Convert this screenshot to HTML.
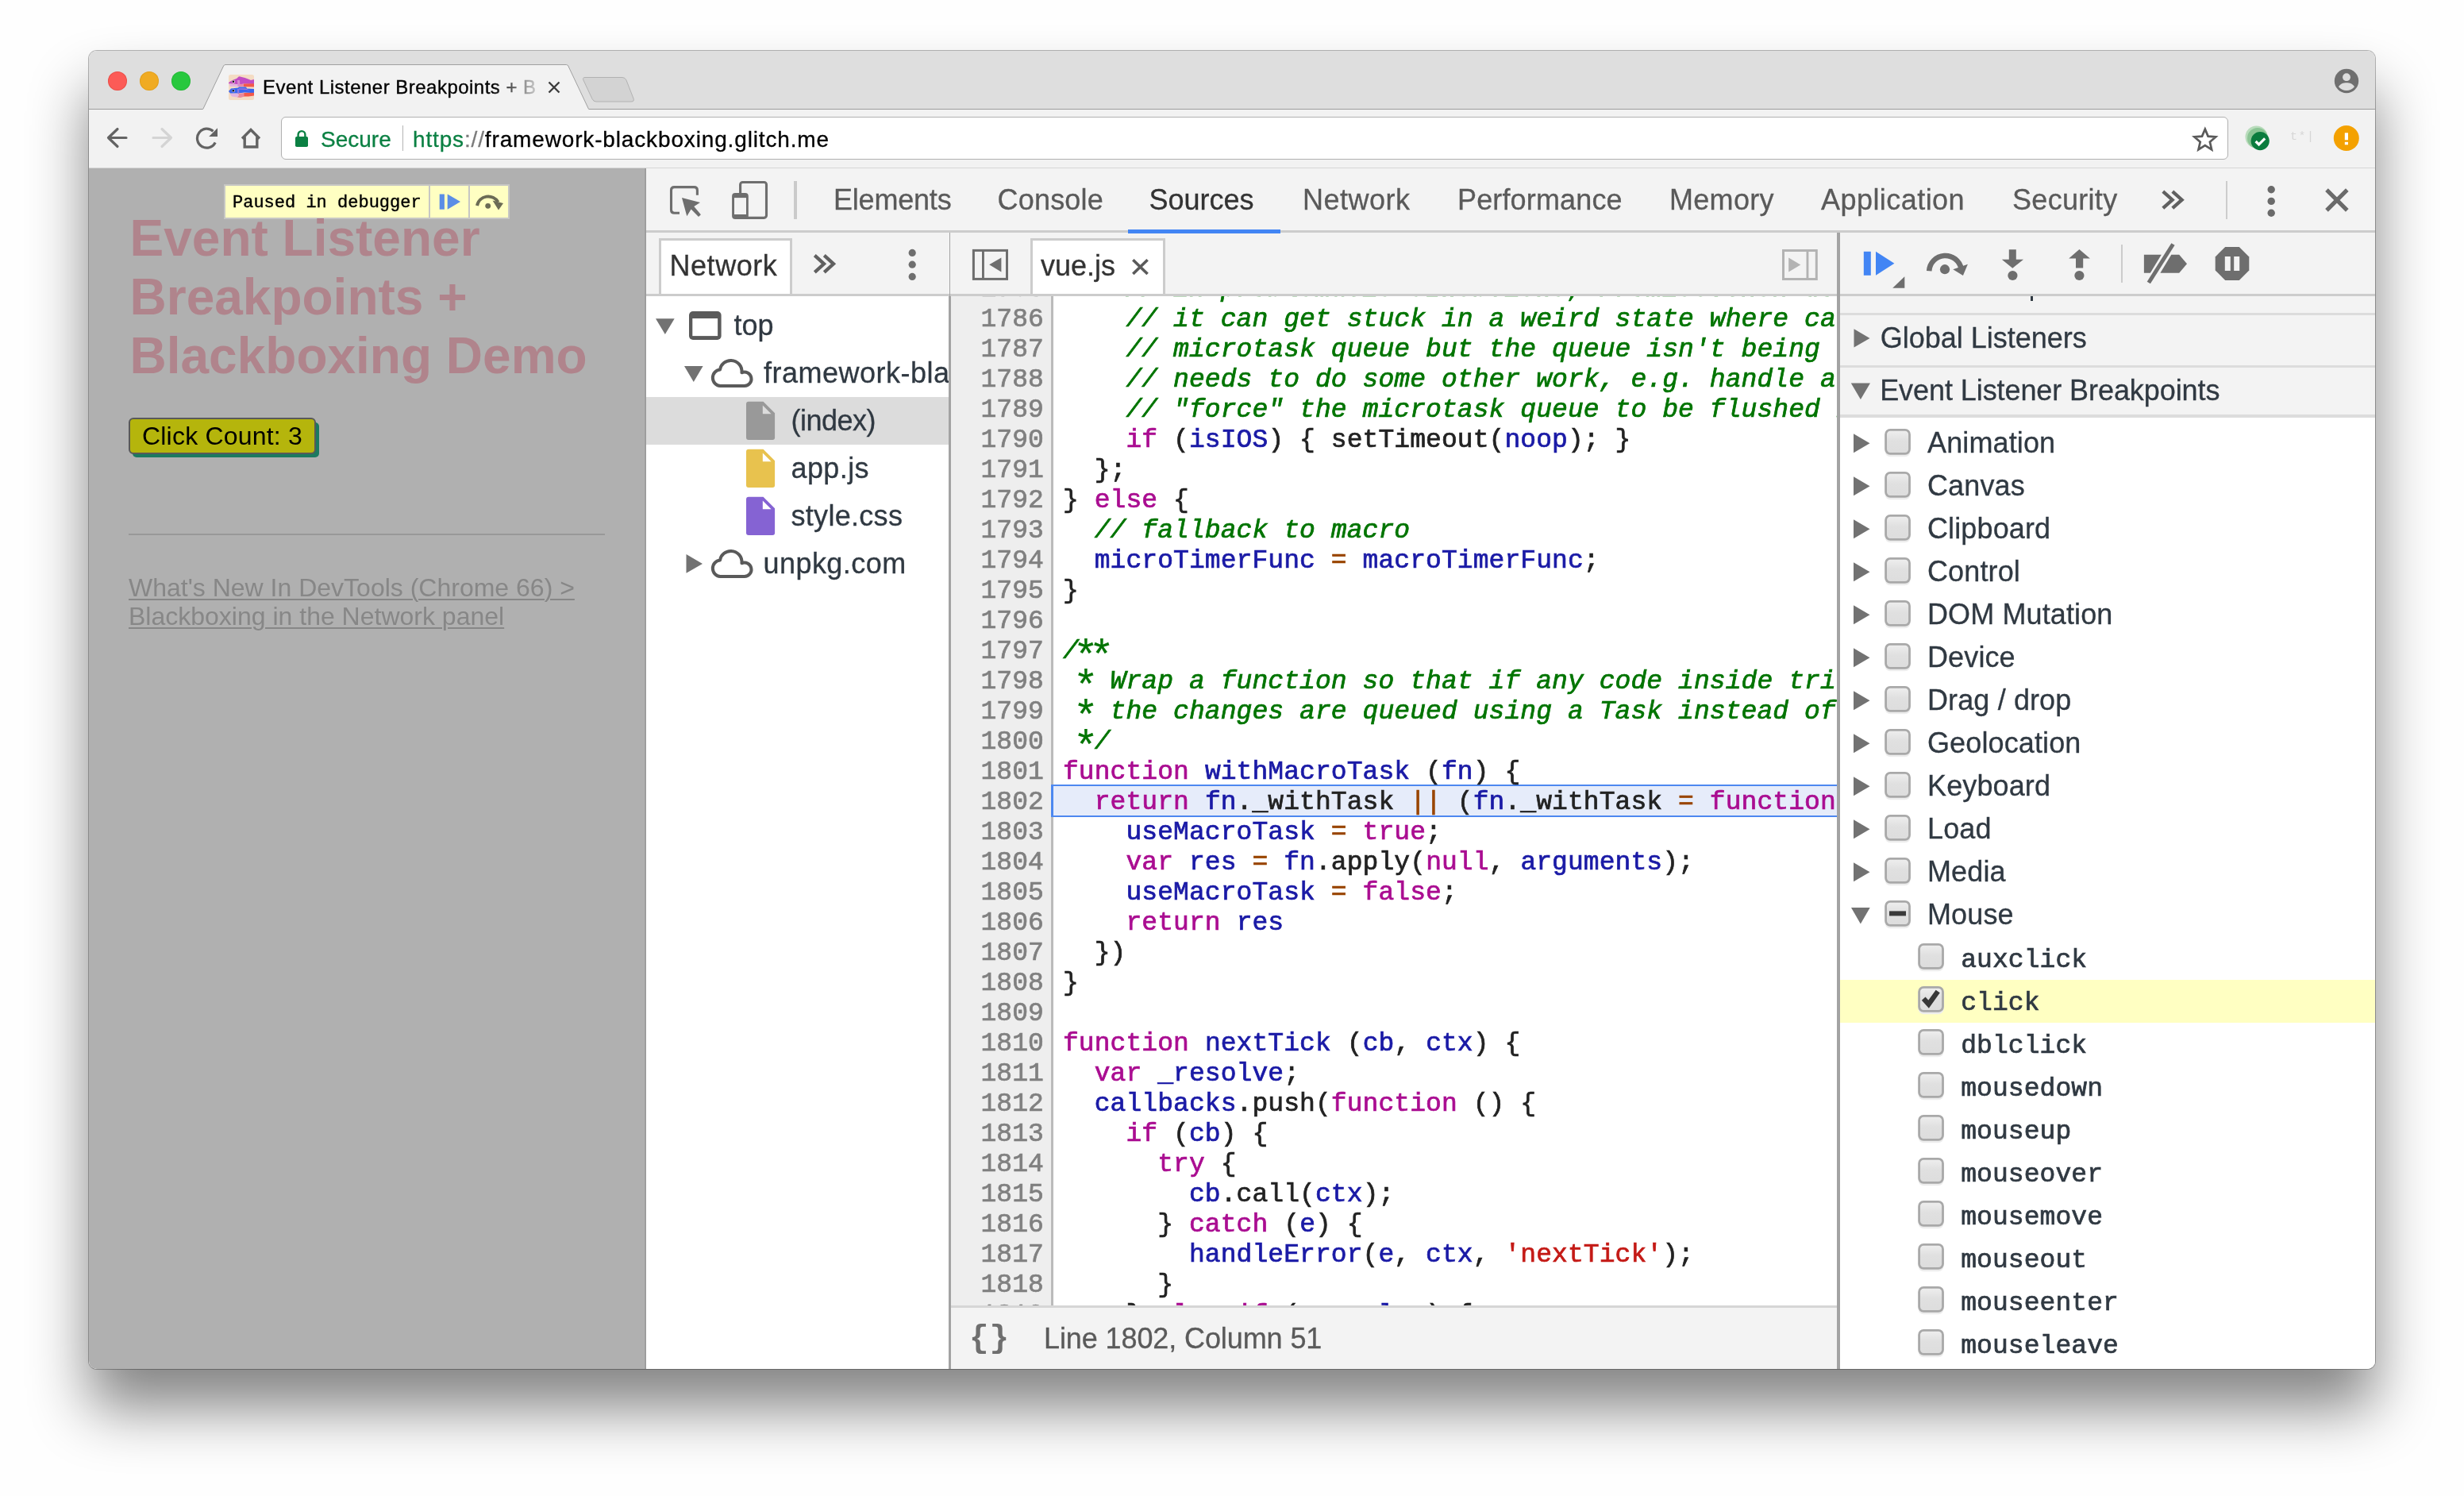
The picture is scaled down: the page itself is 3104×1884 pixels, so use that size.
<!DOCTYPE html>
<html><head><meta charset="utf-8"><title>Event Listener Breakpoints</title>
<style>
*{box-sizing:border-box;margin:0;padding:0}
html,body{width:3104px;height:1884px;overflow:hidden;background:#fefefe;font-family:"Liberation Sans",sans-serif;}
.a{position:absolute}
#shadow{position:absolute;left:112px;top:64px;width:2880px;height:1660px;border-radius:10px;box-shadow:0 50px 75px rgba(0,0,0,.48),0 0 0 1px rgba(0,0,0,.28);}
#win{position:absolute;left:112px;top:64px;width:2880px;height:1660px;border-radius:10px 10px 10px 10px;overflow:hidden;background:#f2f2f2;}
#in{position:absolute;left:-112px;top:-64px;width:3104px;height:1884px;will-change:transform;}
/* chrome */
#tabstrip{left:112px;top:63px;width:2880px;height:74px;background:#dedede;}
#tbline{left:112px;top:136.8px;width:2880px;height:1px;background:#9c9c9c;}
#toolbar{left:112px;top:137px;width:2880px;height:75px;background:#f2f2f2;}
.tl{width:24px;height:24px;border-radius:12px;top:90px}
#omni{left:354px;top:147px;width:2453px;height:54px;background:#fff;border:1px solid #b0b0b0;border-radius:6px;}
.url{top:153.5px;font-size:28px;line-height:44px;height:44px;white-space:nowrap;-webkit-text-stroke:.3px currentColor}
/* page */
#page{left:112px;top:212px;width:702px;height:1512px;background:#b0b0b0;overflow:hidden}
/* devtools */
#dt{left:814px;top:212px;width:2178px;height:1512px;background:#f3f3f3;overflow:hidden}
.sans{font-size:36px;white-space:nowrap;line-height:44px;height:44px;-webkit-text-stroke:.3px currentColor}
.mono{font-family:"Liberation Mono",monospace;font-size:33px;white-space:pre;letter-spacing:.07px;-webkit-text-stroke:.72px currentColor}
.tab{top:230.4px;color:#5a5a5a}
.hb{background:#ccc}
.ast{display:inline-block;transform:translate(-1px,9px) scale(1.6);font-style:normal;-webkit-text-stroke:.15px currentColor}
.k{color:#aa0d91}.d{color:#1a1aa6}.c{color:#007400;font-style:italic}.s{color:#c41a16}.o{color:#994500}
</style></head><body>
<div id="shadow"></div>
<div id="win"><div id="in">
<div class="a" id="tabstrip"></div>
<div class="a" id="toolbar"></div>
<div class="a" id="tbline"></div>
<div class="a" style="left:112px;top:211px;width:2880px;height:1px;background:#d6d6d6"></div>
<!-- active tab -->
<svg class="a" style="left:240px;top:70px" width="580" height="70" viewBox="240 70 580 70">
  <path d="M255.5 138 L281.6 83 Q282.4 81.5 284 81.5 L713.4 81.5 Q715 81.5 715.8 83 L741.8 138 L741.8 140 L255.5 140 Z" fill="#f2f2f2"/>
  <path d="M255.8 137.3 L281.6 83 Q282.4 81.5 284 81.5 L713.4 81.5 Q715 81.5 715.8 83 L741.5 137.3" fill="none" stroke="#a0a0a0" stroke-width="1"/>
  <rect x="256.6" y="137.7" width="484.2" height="2.6" fill="#f2f2f2"/>
  <!-- new tab button -->
  <path d="M737 97.5 L784 97.5 Q787.5 97.5 789 101 L798 124 Q799.5 128 795 128 L751 128 Q747.5 128 746 124.5 L735 101 Q733.5 97.5 737 97.5 Z" fill="#d3d3d3" stroke="#b2b2b2" stroke-width="1"/>
</svg>
<!-- traffic lights -->
<div class="a tl" style="left:136px;background:#fc5b57;box-shadow:inset 0 0 0 1px rgba(200,60,50,.35)"></div>
<div class="a tl" style="left:176px;background:#f0ab23;box-shadow:inset 0 0 0 1px rgba(200,140,20,.35)"></div>
<div class="a tl" style="left:216px;background:#28c83e;box-shadow:inset 0 0 0 1px rgba(30,160,40,.35)"></div>
<!-- favicon -->
<svg class="a" style="left:288px;top:94px" width="32" height="32" viewBox="0 0 32 32">
  <rect x="0" y="0" width="32" height="32" rx="2.5" fill="#f4dcc4"/>
  <path d="M0 10.2 C3 7.4 8 5.6 10 5 L13 2.2 C17 2.6 24 5 28 7 L32 6 L32 12 L20 11.6 L14 12.2 L0 11.2 Z" fill="#c24dc4"/>
  <path d="M0.5 11.4 L14 12.2 L14 15.2 L2 15 Z" fill="#e3b5e0"/>
  <path d="M11 7 L14 7 L14.5 15.2 L11.5 15 Z" fill="#d88cd0"/>
  <path d="M14 12.2 L20 11.6 L20 15.2 L14 15.3 Z" fill="#e88ca4"/>
  <path d="M19 11.6 L32 11.2 L32 15.6 L19 15.2 Z" fill="#f2594b"/>
  <circle cx="6.2" cy="8.8" r="1.9" fill="#f3e6f3"/><circle cx="6" cy="8.8" r="1.3" fill="#16160e"/>
  <path d="M0 21 L3 17.6 L12 16.6 L13 15.6 L22 15.6 L23 17.6 L32 18 L32 23.2 L20 22.6 L12 23.6 L2 23.6 Z" fill="#3a66f0"/>
  <path d="M11 18 L13.2 18 L13.2 24 L11 24 Z" fill="#8a78e0"/>
  <path d="M13 17.6 L21 17.6 L26 19.5 L21 18.8 L13 18.6 Z" fill="#c07ad0"/>
  <path d="M1.5 24 L12 23.8 L13 26 L11 28.6 L4 27.6 Z" fill="#e3b5e0"/>
  <path d="M12 23.8 L20 23 L20 27.6 L15 29 L11 28.6 L13 26 Z" fill="#e88a9c"/>
  <path d="M19.5 23 L32 22.8 L32 26.6 L25 27.6 L19.5 27.6 Z" fill="#f2594b"/>
  <circle cx="6.1" cy="20.3" r="1.9" fill="#d8c8f0"/><circle cx="5.9" cy="20.3" r="1.3" fill="#16160e"/>
</svg>
<div class="a" style="left:331px;top:89.6px;font-size:24px;letter-spacing:.48px;-webkit-text-stroke:.35px currentColor;line-height:40px;height:40px;width:352px;white-space:nowrap;overflow:hidden;color:#000;-webkit-mask-image:linear-gradient(90deg,#000 290px,rgba(0,0,0,.12) 348px);mask-image:linear-gradient(90deg,#000 290px,rgba(0,0,0,.12) 348px)">Event Listener Breakpoints + B</div>
<svg class="a" style="left:688px;top:100px" width="20" height="20" viewBox="0 0 20 20"><path d="M3.5 3.5 L16.5 16.5 M16.5 3.5 L3.5 16.5" stroke="#3c3c3c" stroke-width="2.4" fill="none"/></svg>
<!-- profile -->
<svg class="a" style="left:2940px;top:86px" width="32" height="32" viewBox="0 0 32 32">
  <circle cx="16" cy="16" r="15.2" fill="#6f6f6f"/>
  <circle cx="16" cy="11.2" r="4.9" fill="#dedede"/>
  <path d="M6 23.2 C8 19.5 12 18.2 16 18.2 C20 18.2 24 19.5 26 23.2 C23.5 26.3 20 28 16 28 C12 28 8.5 26.3 6 23.2 Z" fill="#dedede"/>
</svg>
<!-- nav buttons -->
<svg class="a" style="left:130px;top:155px" width="210" height="40" viewBox="130 155 210 40" fill="none" stroke-linecap="round" stroke-linejoin="round">
  <path d="M159 173.5 L137 173.5 M148 162.5 L136.5 173.5 L148 184.5" stroke="#636363" stroke-width="3.2"/>
  <path d="M193 173.5 L215 173.5 M204 162.5 L215.5 173.5 L204 184.5" stroke="#d4d4d4" stroke-width="3.2"/>
  <path d="M271.2 179.5 A12 12 0 1 1 268.5 165.2" stroke="#636363" stroke-width="3.2" stroke-linecap="butt"/>
  <path d="M274 161.2 L274 172 L263.2 172 Z" fill="#636363" stroke="none"/>
  <path d="M305 174.5 L316 163.5 L327 174.5 M308.2 172.5 L308.2 185 L323.8 185 L323.8 172.5" stroke="#636363" stroke-width="3.4" stroke-linecap="butt" stroke-linejoin="miter"/>
</svg>
<div class="a" id="omni"></div>
<!-- lock -->
<svg class="a" style="left:370px;top:160px" width="20" height="28" viewBox="370 160 20 28">
  <rect x="372" y="172" width="16" height="13" rx="1.8" fill="#0b8043"/>
  <path d="M375.6 173 L375.6 169.5 A4.4 4.4 0 0 1 384.4 169.5 L384.4 173" fill="none" stroke="#0b8043" stroke-width="2.4"/>
</svg>
<div class="a url" style="left:404px;color:#0b8043">Secure</div>
<div class="a" style="left:507px;top:158px;width:1px;height:32px;background:#b4b4b4"></div>
<div class="a url" style="left:520px;letter-spacing:.85px;color:#000"><span style="color:#0b8043">https</span><span style="color:#7a7a7a">://</span>framework-blackboxing.glitch.me</div>
<!-- star -->
<svg class="a" style="left:2760px;top:158px" width="36" height="34" viewBox="2760 158 36 34">
  <path d="M2777.8 162.6 L2781.6 171.6 L2791.3 172.4 L2783.9 178.8 L2786.1 188.3 L2777.8 183.2 L2769.5 188.3 L2771.7 178.8 L2764.3 172.4 L2774 171.6 Z" fill="none" stroke="#5a5a5a" stroke-width="2.7" stroke-linejoin="miter"/>
</svg>
<!-- ext icons -->
<svg class="a" style="left:2826px;top:156px" width="38" height="38" viewBox="2826 156 38 38">
  <circle cx="2842.5" cy="172.5" r="14" fill="#b9dcbc"/>
  <circle cx="2844" cy="174" r="13" fill="#8cc595"/>
  <circle cx="2847.2" cy="177.6" r="11.6" fill="#0b7c3e"/>
  <path d="M2841.6 178 L2845.6 182 L2853.2 174.4" fill="none" stroke="#fff" stroke-width="3.2"/>
</svg>
<div class="a" style="left:2885px;top:162px;font-size:15px;line-height:22px;color:#d6d6d6;letter-spacing:1.5px;font-family:'Liberation Mono',monospace">t*|</div>
<svg class="a" style="left:2938px;top:156px" width="36" height="36" viewBox="2938 156 36 36">
  <circle cx="2955.8" cy="174" r="16" fill="#f4a100"/>
  <rect x="2953.8" y="167.3" width="4.2" height="9" fill="#fff"/><rect x="2953.8" y="178.8" width="4.2" height="3.5" fill="#fff"/>
</svg>

<div class="a" id="page"></div>
<div class="a" style="left:812px;top:212px;width:2px;height:1512px;background:linear-gradient(90deg,#a4a4a4,#989898)"></div>
<!-- paused overlay -->
<div class="a" style="left:282px;top:232px;width:360px;height:44px;background:#ffffc2;border:2px solid #c7c7c4"></div>
<div class="a" style="left:540px;top:234px;width:2px;height:40px;background:#c7c7c4"></div>
<div class="a" style="left:590px;top:234px;width:2px;height:40px;background:#c7c7c4"></div>
<div class="a" style="left:293px;top:237px;font-family:'Liberation Mono',monospace;font-size:22px;line-height:38px;height:38px;white-space:pre;color:#000;-webkit-text-stroke:.4px #000">Paused in debugger</div>
<svg class="a" style="left:546px;top:236px" width="94" height="36" viewBox="546 236 94 36">
  <rect x="553.7" y="244.5" width="6.2" height="19.2" fill="#5b8de6"/>
  <path d="M563.7 244.5 L580 254.1 L563.7 263.7 Z" fill="#5b8de6"/>
  <path d="M601 259 A14.4 14.4 0 0 1 627.5 254.5" fill="none" stroke="#6b6b55" stroke-width="4"/>
  <path d="M620.5 252.5 L634 256 L628 264.5 Z" fill="#6b6b55"/>
  <circle cx="614.7" cy="259.3" r="3.4" fill="#6b6b55"/>
</svg>
<!-- heading -->
<div class="a" style="left:163.5px;top:262.5px;width:640px;font-size:64px;line-height:74px;font-weight:bold;color:#b0848c;white-space:nowrap">Event Listener<br>Breakpoints +<br>Blackboxing Demo</div>
<!-- button -->
<div class="a" style="left:167px;top:531.5px;width:235px;height:44px;background:#1b7a60;border-radius:5px"></div>
<div class="a" style="left:162px;top:526px;width:236px;height:46px;background:#b5b50c;border:2px solid #595959;border-radius:6px;font-size:32px;line-height:42px;color:#000;text-align:center;white-space:nowrap;letter-spacing:.2px">Click Count: 3</div>
<div class="a" style="left:162px;top:672px;width:600px;height:2px;background:#989898"></div>
<div class="a" style="left:162px;top:722px;width:640px;font-size:32px;line-height:36px;color:#878787;text-decoration:underline;text-decoration-thickness:2px;text-underline-offset:3px;white-space:nowrap">What's New In DevTools (Chrome 66) &gt;<br>Blackboxing in the Network panel</div>

<div class="a" id="dt"></div>
<!-- main toolbar -->
<div class="a hb" style="left:814px;top:290px;width:2178px;height:3px"></div>
<svg class="a" style="left:838px;top:224px" width="170" height="56" viewBox="838 224 170 56">
  <path d="M856 268.25 L849.5 268.25 Q845.5 268.25 845.5 264.25 L845.5 239.6 Q845.5 235.6 849.5 235.6 L874.4 235.6 Q878.4 235.6 878.4 239.6 L878.4 245.8" fill="none" stroke="#6e6e6e" stroke-width="3.1"/>
  <path d="M859 249 L882 255 L874.3 260 L882.9 270.3 L880 272.9 L870.6 263.6 L865.3 272.3 Z" fill="#6e6e6e"/>
  <rect x="932.6" y="229.55" width="32.9" height="44.8" rx="3" fill="none" stroke="#6e6e6e" stroke-width="3.1"/>
  <rect x="922.1" y="243" width="20.7" height="32.9" rx="4" fill="#6e6e6e"/>
  <rect x="925" y="249.1" width="15" height="20.9" fill="#f3f3f3"/>
  <rect x="1000" y="228" width="4" height="48" fill="#cacaca"/>
</svg>
<div class="a sans tab" style="left:1050px;letter-spacing:-.2px">Elements</div>
<div class="a sans tab" style="left:1256.5px;letter-spacing:.2px">Console</div>
<div class="a sans tab" style="left:1447.5px;color:#333">Sources</div>
<div class="a sans tab" style="left:1641px;letter-spacing:.5px">Network</div>
<div class="a sans tab" style="left:1836px;letter-spacing:.15px">Performance</div>
<div class="a sans tab" style="left:2103px;letter-spacing:.3px">Memory</div>
<div class="a sans tab" style="left:2294px;letter-spacing:.45px">Application</div>
<div class="a sans tab" style="left:2535px;letter-spacing:.3px">Security</div>
<div class="a" style="left:1421px;top:289px;width:192px;height:5px;background:#4285f4"></div>
<svg class="a" style="left:2715px;top:224px" width="260" height="56" viewBox="2715 224 260 56" fill="none">
  <path d="M2724.8 241.2 L2736.6 251.7 L2724.8 262.2 M2736.8 241.2 L2748.6 251.7 L2736.8 262.2" stroke="#606060" stroke-width="4.3"/>
  <rect x="2804" y="228" width="2" height="48" fill="#ccc"/>
  <circle cx="2861.2" cy="238.8" r="4.7" fill="#6a6a6a"/><circle cx="2861.2" cy="253.4" r="4.7" fill="#6a6a6a"/><circle cx="2861.2" cy="268.2" r="4.7" fill="#6a6a6a"/>
  <path d="M2931 239.2 L2956.8 264.8 M2956.8 239.2 L2931 264.8" stroke="#6a6a6a" stroke-width="5.2"/>
</svg>
<!-- second toolbar row -->
<div class="a hb" style="left:814px;top:370px;width:2178px;height:3px"></div>
<div class="a" style="left:830px;top:300px;width:168px;height:70px;background:#fff;border:3px solid #ccc;border-bottom:none"></div>
<div class="a sans" style="left:843.5px;top:312.5px;color:#333;letter-spacing:.55px">Network</div>
<svg class="a" style="left:1015px;top:305px" width="150" height="60" viewBox="1015 305 150 60" fill="none">
  <path d="M1026.3 321.7 L1038 332.3 L1026.3 342.9 M1038.3 321.7 L1050 332.3 L1038.3 342.9" stroke="#606060" stroke-width="4.3"/>
  <circle cx="1149.2" cy="318.4" r="4.6" fill="#6e6e6e"/><circle cx="1149.2" cy="333.2" r="4.6" fill="#6e6e6e"/><circle cx="1149.2" cy="348.4" r="4.6" fill="#6e6e6e"/>
</svg>
<div class="a" style="left:1196px;top:293px;width:1px;height:80px;background:#a3a3a3"></div>
<!-- editor tab row -->
<svg class="a" style="left:1220px;top:308px" width="56" height="50" viewBox="1220 308 56 50">
  <rect x="1226.4" y="315.4" width="42.1" height="36" fill="none" stroke="#6e6e6e" stroke-width="3"/>
  <rect x="1237" y="315" width="2.9" height="37" fill="#6e6e6e"/>
  <path d="M1246.2 333.3 L1261.4 324.5 L1261.4 342.4 Z" fill="#6e6e6e"/>
</svg>
<div class="a" style="left:1298px;top:300px;width:170px;height:70px;background:#fff;border:3px solid #ccc;border-bottom:none"></div>
<div class="a sans" style="left:1311px;top:313.2px;color:#333">vue.js</div>
<svg class="a" style="left:1420px;top:320px" width="32" height="32" viewBox="1420 320 32 32"><path d="M1427.3 327.3 L1445.6 345 M1445.6 327.3 L1427.3 345" stroke="#5a5a5a" stroke-width="3.6" fill="none"/></svg>
<svg class="a" style="left:2240px;top:308px" width="56" height="50" viewBox="2240 308 56 50">
  <rect x="2246.5" y="315.5" width="41.8" height="36" fill="none" stroke="#b3b3b3" stroke-width="3"/>
  <rect x="2275.5" y="315" width="2.9" height="37" fill="#b3b3b3"/>
  <path d="M2268.3 333.5 L2253.2 324.6 L2253.2 342.6 Z" fill="#b3b3b3"/>
</svg>
<div class="a" style="left:2314px;top:293px;width:4px;height:1431px;background:#a3a3a3"></div>
<!-- debugger toolbar -->
<svg class="a" style="left:2330px;top:300px" width="520" height="68" viewBox="2330 300 520 68">
  <rect x="2347.8" y="316.8" width="9" height="30" fill="#4285f4"/>
  <path d="M2363 316.8 L2386.4 331.8 L2363 346.8 Z" fill="#4285f4"/>
  <path d="M2384.2 362.8 L2399.3 362.8 L2399.3 348.2 Z" fill="#6e6e6e"/>
  <path d="M2430.2 341.2 A20.4 20.4 0 0 1 2470.6 338.5" fill="none" stroke="#6e6e6e" stroke-width="6.6"/>
  <path d="M2460.3 339.3 L2478.9 332.7 L2472.9 347 Z" fill="#6e6e6e"/>
  <circle cx="2450" cy="339.2" r="6.1" fill="#6e6e6e"/>
  <path d="M2530.8 314.2 L2539.8 314.2 L2539.8 326.7 L2549 326.7 L2535.3 337.8 L2521.8 326.7 L2530.8 326.7 Z" fill="#6e6e6e"/>
  <circle cx="2535.4" cy="347" r="6.1" fill="#6e6e6e"/>
  <path d="M2619.4 314 L2632.9 325.6 L2624.2 325.6 L2624.2 337.6 L2615 337.6 L2615 325.6 L2606.2 325.6 Z" fill="#6e6e6e"/>
  <circle cx="2619.4" cy="347" r="6.1" fill="#6e6e6e"/>
  <rect x="2672" y="308" width="2" height="48" fill="#ccc"/>
  <path d="M2700.9 320.8 L2722.8 320.8 L2708.8 343.8 L2700.9 343.8 Z" fill="#6e6e6e"/>
  <path d="M2735.3 320.8 L2745.2 320.8 L2755 332.2 L2745.2 343.8 L2721.4 343.8 Z" fill="#6e6e6e"/>
  <path d="M2737.5 307.5 L2706.8 356" stroke="#6e6e6e" stroke-width="5" fill="none"/>
  <path d="M2803.2 310.9 L2820.8 310.9 L2833.3 323.4 L2833.3 340.6 L2820.8 353 L2803.2 353 L2790.7 340.6 L2790.7 323.4 Z" fill="#6e6e6e"/>
  <rect x="2802.8" y="323" width="7" height="18" fill="#f3f3f3"/><rect x="2814.2" y="323" width="7" height="18" fill="#f3f3f3"/>
</svg>
<div class="a" style="left:814px;top:373px;width:381px;height:1351px;background:#fff"></div>
<div class="a" style="left:814px;top:500px;width:381px;height:60px;background:#dcdcdc"></div>
<div class="a" style="left:1195px;top:373px;width:3px;height:1351px;background:#a3a3a3"></div>
<svg class="a" style="left:814px;top:373px" width="381" height="380" viewBox="814 373 381 380">
<path d="M826 401.2 L849.7 401.2 L837.85 421 Z" fill="#727272"/>
<rect x="868" y="392" width="40.6" height="36" rx="5" fill="#5a5a5a"/><rect x="872.3" y="401" width="31.8" height="22.1" fill="#fff"/>
<path d="M862 461 L885.6 461 L873.8 481.1 Z" fill="#727272"/>
<path transform="translate(0,0)" d="M907.3 486 A10.3 10.3 0 0 1 907 465.5 A13.8 13.8 0 0 1 921.1 453.9 A13.8 13.8 0 0 1 934.4 469.3 A8.7 8.7 0 1 1 937.8 486 Z" fill="none" stroke="#5a5a5a" stroke-width="4" stroke-linejoin="round"/>
<g transform="translate(0,0)"><path d="M943 505.7 L961.5 505.7 L976.1 520.3 L976.1 551 Q976.1 554 973.1 554 L943 554 Q940 554 940 551 L940 508.7 Q940 505.7 943 505.7 Z" fill="#999"/><path d="M960.8 510.6 L960.8 521.3 L971.6 521.3 Z" fill="#dcdcdc"/></g>
<g transform="translate(0,60)"><path d="M943 505.7 L961.5 505.7 L976.1 520.3 L976.1 551 Q976.1 554 973.1 554 L943 554 Q940 554 940 551 L940 508.7 Q940 505.7 943 505.7 Z" fill="#e8c24e"/><path d="M960.8 510.6 L960.8 521.3 L971.6 521.3 Z" fill="#fff"/></g>
<g transform="translate(0,120)"><path d="M943 505.7 L961.5 505.7 L976.1 520.3 L976.1 551 Q976.1 554 973.1 554 L943 554 Q940 554 940 551 L940 508.7 Q940 505.7 943 505.7 Z" fill="#8563d3"/><path d="M960.8 510.6 L960.8 521.3 L971.6 521.3 Z" fill="#fff"/></g>
<path d="M864.5 698 L885 709.9 L864.5 721.8 Z" fill="#727272"/>
<path transform="translate(0,240)" d="M907.3 486 A10.3 10.3 0 0 1 907 465.5 A13.8 13.8 0 0 1 921.1 453.9 A13.8 13.8 0 0 1 934.4 469.3 A8.7 8.7 0 1 1 937.8 486 Z" fill="none" stroke="#5a5a5a" stroke-width="4" stroke-linejoin="round"/>
</svg>
<div class="a sans" style="left:924.5px;top:387.7px;color:#303942;letter-spacing:0px">top</div>
<div class="a sans" style="left:962px;top:447.7px;color:#303942;width:233px;overflow:hidden;letter-spacing:.5px">framework-blackboxing.glitch.me</div>
<div class="a sans" style="left:996.5px;top:507.7px;color:#303942;letter-spacing:-0.5px">(index)</div>
<div class="a sans" style="left:996.5px;top:567.7px;color:#303942;letter-spacing:0.4px">app.js</div>
<div class="a sans" style="left:996.5px;top:627.7px;color:#303942;letter-spacing:0.3px">style.css</div>
<div class="a sans" style="left:961.5px;top:687.7px;color:#303942;letter-spacing:0.45px">unpkg.com</div>
<div class="a" style="left:1198px;top:373px;width:1116px;height:1271px;background:#fff"></div>
<div class="a" style="left:1198px;top:373px;width:126px;height:1271px;background:#eee"></div>
<div class="a" style="left:1324px;top:373px;width:3px;height:1271px;background:#bbb"></div>
<div class="a" style="left:1324px;top:988px;width:990px;height:41px;background:#e6ecfa;border:2px solid #4d88f0;border-left-width:3px;border-right:none"></div>
<div class="a" style="left:1198px;top:373px;width:1116px;height:1271px;overflow:hidden">
<div class="a mono" id="gut" style="left:0;top:-26.80000000000001px;width:117px;text-align:right;line-height:38px;color:#808080">1785
1786
1787
1788
1789
1790
1791
1792
1793
1794
1795
1796
1797
1798
1799
1800
1801
1802
1803
1804
1805
1806
1807
1808
1809
1810
1811
1812
1813
1814
1815
1816
1817
1818
1819</div>
<div class="a mono" id="code" style="left:141px;top:-26.80000000000001px;line-height:38px;color:#222">    <span class="c">// in problematic UIWebViews, Promise.then doesn&#x27;t completely</span>
    <span class="c">// it can get stuck in a weird state where callbacks are pushed</span>
    <span class="c">// microtask queue but the queue isn&#x27;t being flushed, until the</span>
    <span class="c">// needs to do some other work, e.g. handle a timer. Therefore</span>
    <span class="c">// &quot;force&quot; the microtask queue to be flushed by adding an empty</span>
    <span class="k">if</span> (<span class="d">isIOS</span>) { setTimeout(<span class="d">noop</span>); }
  };
} <span class="k">else</span> {
  <span class="c">// fallback to macro</span>
  <span class="d">microTimerFunc</span> <span class="o">=</span> <span class="d">macroTimerFunc</span>;
}

<span class="c">/<span class="ast">*</span><span class="ast">*</span></span>
<span class="c"> <span class="ast">*</span> Wrap a function so that if any code inside tri</span>
<span class="c"> <span class="ast">*</span> the changes are queued using a Task instead of a MicroTask.</span>
<span class="c"> <span class="ast">*</span>/</span>
<span class="k">function</span> <span class="d">withMacroTask</span> (<span class="d">fn</span>) {
  <span class="k">return</span> <span class="d">fn</span>._withTask <span class="o">||</span> (<span class="d">fn</span>._withTask <span class="o">=</span> <span class="k">function</span> () {
    <span class="d">useMacroTask</span> <span class="o">=</span> <span class="k">true</span>;
    <span class="k">var</span> <span class="d">res</span> <span class="o">=</span> <span class="d">fn</span>.apply(<span class="k">null</span>, <span class="d">arguments</span>);
    <span class="d">useMacroTask</span> <span class="o">=</span> <span class="k">false</span>;
    <span class="k">return</span> <span class="d">res</span>
  })
}

<span class="k">function</span> <span class="d">nextTick</span> (<span class="d">cb</span>, <span class="d">ctx</span>) {
  <span class="k">var</span> <span class="d">_resolve</span>;
  <span class="d">callbacks</span>.push(<span class="k">function</span> () {
    <span class="k">if</span> (<span class="d">cb</span>) {
      <span class="k">try</span> {
        <span class="d">cb</span>.call(<span class="d">ctx</span>);
      } <span class="k">catch</span> (<span class="d">e</span>) {
        <span class="d">handleError</span>(<span class="d">e</span>, <span class="d">ctx</span>, <span class="s">&#x27;nextTick&#x27;</span>);
      }
    } <span class="k">else</span> <span class="k">if</span> (<span class="d">_resolve</span>) {</div>
</div>
<div class="a" style="left:1198px;top:1644px;width:1116px;height:3px;background:#d6d6d6"></div>
<div class="a" style="left:1198px;top:1647px;width:1116px;height:77px;background:#f3f3f3"></div>
<div class="a" style="left:1221px;top:1661.5px;font-family:'Liberation Mono',monospace;font-weight:bold;font-size:41px;line-height:48px;color:#6e6e6e;letter-spacing:1px;white-space:pre">{}</div>
<div class="a sans" style="left:1315px;top:1663.5px;color:#5a5a5a;letter-spacing:-.1px">Line 1802, Column 51</div>
<div class="a" style="left:2318px;top:373px;width:674px;height:1351px;background:#fff"></div>
<div class="a" style="left:2318px;top:373px;width:674px;height:149px;background:#f3f3f3"></div>
<div class="a" style="left:2318px;top:394px;width:674px;height:3px;background:#dcdcdc"></div>
<div class="a" style="left:2318px;top:460px;width:674px;height:3px;background:#dcdcdc"></div>
<div class="a" style="left:2318px;top:522px;width:674px;height:4px;background:#dcdcdc"></div>
<div class="a" style="left:2557.5px;top:373px;width:3.2px;height:5.6px;background:#303942"></div>
<div class="a sans" style="left:2368.7px;top:404px;color:#303942">Global Listeners</div>
<div class="a sans" style="left:2368.2px;top:470.2px;color:#303942;letter-spacing:-.08px">Event Listener Breakpoints</div>
<div class="a" style="left:2318px;top:1234px;width:674px;height:54px;background:#ffffc2"></div>
<div class="a sans" style="left:2428px;top:536px;color:#303942;letter-spacing:.12px">Animation</div>
<div class="a sans" style="left:2428px;top:590px;color:#303942;letter-spacing:.12px">Canvas</div>
<div class="a sans" style="left:2428px;top:644px;color:#303942;letter-spacing:.12px">Clipboard</div>
<div class="a sans" style="left:2428px;top:698px;color:#303942;letter-spacing:.12px">Control</div>
<div class="a sans" style="left:2428px;top:752px;color:#303942;letter-spacing:.12px">DOM Mutation</div>
<div class="a sans" style="left:2428px;top:806px;color:#303942;letter-spacing:.12px">Device</div>
<div class="a sans" style="left:2428px;top:860px;color:#303942;letter-spacing:.12px">Drag / drop</div>
<div class="a sans" style="left:2428px;top:914px;color:#303942;letter-spacing:.12px">Geolocation</div>
<div class="a sans" style="left:2428px;top:968px;color:#303942;letter-spacing:.12px">Keyboard</div>
<div class="a sans" style="left:2428px;top:1022px;color:#303942;letter-spacing:.12px">Load</div>
<div class="a sans" style="left:2428px;top:1076px;color:#303942;letter-spacing:.12px">Media</div>
<div class="a sans" style="left:2428px;top:1130px;color:#303942;letter-spacing:.12px">Mouse</div>
<div class="a mono" style="left:2470.2px;top:1187.5px;line-height:44px;height:44px;color:#303942">auxclick</div>
<div class="a mono" style="left:2470.2px;top:1241.5px;line-height:44px;height:44px;color:#303942">click</div>
<div class="a mono" style="left:2470.2px;top:1295.5px;line-height:44px;height:44px;color:#303942">dblclick</div>
<div class="a mono" style="left:2470.2px;top:1349.5px;line-height:44px;height:44px;color:#303942">mousedown</div>
<div class="a mono" style="left:2470.2px;top:1403.5px;line-height:44px;height:44px;color:#303942">mouseup</div>
<div class="a mono" style="left:2470.2px;top:1457.5px;line-height:44px;height:44px;color:#303942">mouseover</div>
<div class="a mono" style="left:2470.2px;top:1511.5px;line-height:44px;height:44px;color:#303942">mousemove</div>
<div class="a mono" style="left:2470.2px;top:1565.5px;line-height:44px;height:44px;color:#303942">mouseout</div>
<div class="a mono" style="left:2470.2px;top:1619.5px;line-height:44px;height:44px;color:#303942">mouseenter</div>
<div class="a mono" style="left:2470.2px;top:1673.5px;line-height:44px;height:44px;color:#303942">mouseleave</div>
<svg class="a" style="left:2318px;top:373px" width="674" height="1351" viewBox="2318 373 674 1351"><defs><linearGradient id="cbg" x1="0" y1="0" x2="0" y2="1"><stop offset="0" stop-color="#efefef"/><stop offset=".45" stop-color="#e0e0e0"/><stop offset="1" stop-color="#dddddd"/></linearGradient></defs><path d="M2335.5 414.3 L2355.5 425.9 L2335.5 437.5 Z" fill="#727272"/><path d="M2331.8 482.5 L2356 482.5 L2343.9 503 Z" fill="#727272"/><path d="M2335 546.3 L2355.5 558.25 L2335 570.2 Z" fill="#727272"/><rect x="2374.5" y="542.6" width="32.1" height="32.6" rx="7" fill="#ededed"/><rect x="2375.6" y="541.4" width="29.9" height="30" rx="5.6" fill="url(#cbg)" stroke="#a9a9a9" stroke-width="2.8"/><path d="M2335 600.3 L2355.5 612.25 L2335 624.2 Z" fill="#727272"/><rect x="2374.5" y="596.6" width="32.1" height="32.6" rx="7" fill="#ededed"/><rect x="2375.6" y="595.4" width="29.9" height="30" rx="5.6" fill="url(#cbg)" stroke="#a9a9a9" stroke-width="2.8"/><path d="M2335 654.3 L2355.5 666.25 L2335 678.2 Z" fill="#727272"/><rect x="2374.5" y="650.6" width="32.1" height="32.6" rx="7" fill="#ededed"/><rect x="2375.6" y="649.4" width="29.9" height="30" rx="5.6" fill="url(#cbg)" stroke="#a9a9a9" stroke-width="2.8"/><path d="M2335 708.3 L2355.5 720.25 L2335 732.2 Z" fill="#727272"/><rect x="2374.5" y="704.6" width="32.1" height="32.6" rx="7" fill="#ededed"/><rect x="2375.6" y="703.4" width="29.9" height="30" rx="5.6" fill="url(#cbg)" stroke="#a9a9a9" stroke-width="2.8"/><path d="M2335 762.3 L2355.5 774.25 L2335 786.2 Z" fill="#727272"/><rect x="2374.5" y="758.6" width="32.1" height="32.6" rx="7" fill="#ededed"/><rect x="2375.6" y="757.4" width="29.9" height="30" rx="5.6" fill="url(#cbg)" stroke="#a9a9a9" stroke-width="2.8"/><path d="M2335 816.3 L2355.5 828.25 L2335 840.2 Z" fill="#727272"/><rect x="2374.5" y="812.6" width="32.1" height="32.6" rx="7" fill="#ededed"/><rect x="2375.6" y="811.4" width="29.9" height="30" rx="5.6" fill="url(#cbg)" stroke="#a9a9a9" stroke-width="2.8"/><path d="M2335 870.3 L2355.5 882.25 L2335 894.2 Z" fill="#727272"/><rect x="2374.5" y="866.6" width="32.1" height="32.6" rx="7" fill="#ededed"/><rect x="2375.6" y="865.4" width="29.9" height="30" rx="5.6" fill="url(#cbg)" stroke="#a9a9a9" stroke-width="2.8"/><path d="M2335 924.3 L2355.5 936.25 L2335 948.2 Z" fill="#727272"/><rect x="2374.5" y="920.6" width="32.1" height="32.6" rx="7" fill="#ededed"/><rect x="2375.6" y="919.4" width="29.9" height="30" rx="5.6" fill="url(#cbg)" stroke="#a9a9a9" stroke-width="2.8"/><path d="M2335 978.3 L2355.5 990.25 L2335 1002.2 Z" fill="#727272"/><rect x="2374.5" y="974.6" width="32.1" height="32.6" rx="7" fill="#ededed"/><rect x="2375.6" y="973.4" width="29.9" height="30" rx="5.6" fill="url(#cbg)" stroke="#a9a9a9" stroke-width="2.8"/><path d="M2335 1032.3 L2355.5 1044.25 L2335 1056.2 Z" fill="#727272"/><rect x="2374.5" y="1028.6" width="32.1" height="32.6" rx="7" fill="#ededed"/><rect x="2375.6" y="1027.4" width="29.9" height="30" rx="5.6" fill="url(#cbg)" stroke="#a9a9a9" stroke-width="2.8"/><path d="M2335 1086.3 L2355.5 1098.25 L2335 1110.2 Z" fill="#727272"/><rect x="2374.5" y="1082.6" width="32.1" height="32.6" rx="7" fill="#ededed"/><rect x="2375.6" y="1081.4" width="29.9" height="30" rx="5.6" fill="url(#cbg)" stroke="#a9a9a9" stroke-width="2.8"/><path d="M2332 1143.1 L2355.7 1143.1 L2343.85 1163.4 Z" fill="#727272"/><rect x="2374.5" y="1136.6" width="32.1" height="32.6" rx="7" fill="#ededed"/><rect x="2375.6" y="1135.4" width="29.9" height="30" rx="5.6" fill="url(#cbg)" stroke="#a9a9a9" stroke-width="2.8"/><rect x="2380" y="1147.4" width="21" height="6" fill="#3a3a3a"/><rect x="2416.5" y="1190.6" width="32.1" height="32.6" rx="7" fill="#ededed"/><rect x="2417.6" y="1189.4" width="29.9" height="30" rx="5.6" fill="url(#cbg)" stroke="#a9a9a9" stroke-width="2.8"/><rect x="2416.5" y="1244.6" width="32.1" height="32.6" rx="7" fill="#ededed"/><rect x="2417.6" y="1243.4" width="29.9" height="30" rx="5.6" fill="url(#cbg)" stroke="#a9a9a9" stroke-width="2.8"/><path d="M2423.2 1257.6 L2429.6 1264.7 L2441.2 1248.5" fill="none" stroke="#383838" stroke-width="6.3" stroke-linejoin="miter"/><rect x="2416.5" y="1298.6" width="32.1" height="32.6" rx="7" fill="#ededed"/><rect x="2417.6" y="1297.4" width="29.9" height="30" rx="5.6" fill="url(#cbg)" stroke="#a9a9a9" stroke-width="2.8"/><rect x="2416.5" y="1352.6" width="32.1" height="32.6" rx="7" fill="#ededed"/><rect x="2417.6" y="1351.4" width="29.9" height="30" rx="5.6" fill="url(#cbg)" stroke="#a9a9a9" stroke-width="2.8"/><rect x="2416.5" y="1406.6" width="32.1" height="32.6" rx="7" fill="#ededed"/><rect x="2417.6" y="1405.4" width="29.9" height="30" rx="5.6" fill="url(#cbg)" stroke="#a9a9a9" stroke-width="2.8"/><rect x="2416.5" y="1460.6" width="32.1" height="32.6" rx="7" fill="#ededed"/><rect x="2417.6" y="1459.4" width="29.9" height="30" rx="5.6" fill="url(#cbg)" stroke="#a9a9a9" stroke-width="2.8"/><rect x="2416.5" y="1514.6" width="32.1" height="32.6" rx="7" fill="#ededed"/><rect x="2417.6" y="1513.4" width="29.9" height="30" rx="5.6" fill="url(#cbg)" stroke="#a9a9a9" stroke-width="2.8"/><rect x="2416.5" y="1568.6" width="32.1" height="32.6" rx="7" fill="#ededed"/><rect x="2417.6" y="1567.4" width="29.9" height="30" rx="5.6" fill="url(#cbg)" stroke="#a9a9a9" stroke-width="2.8"/><rect x="2416.5" y="1622.6" width="32.1" height="32.6" rx="7" fill="#ededed"/><rect x="2417.6" y="1621.4" width="29.9" height="30" rx="5.6" fill="url(#cbg)" stroke="#a9a9a9" stroke-width="2.8"/><rect x="2416.5" y="1676.6" width="32.1" height="32.6" rx="7" fill="#ededed"/><rect x="2417.6" y="1675.4" width="29.9" height="30" rx="5.6" fill="url(#cbg)" stroke="#a9a9a9" stroke-width="2.8"/></svg>

</div></div>
</body></html>
